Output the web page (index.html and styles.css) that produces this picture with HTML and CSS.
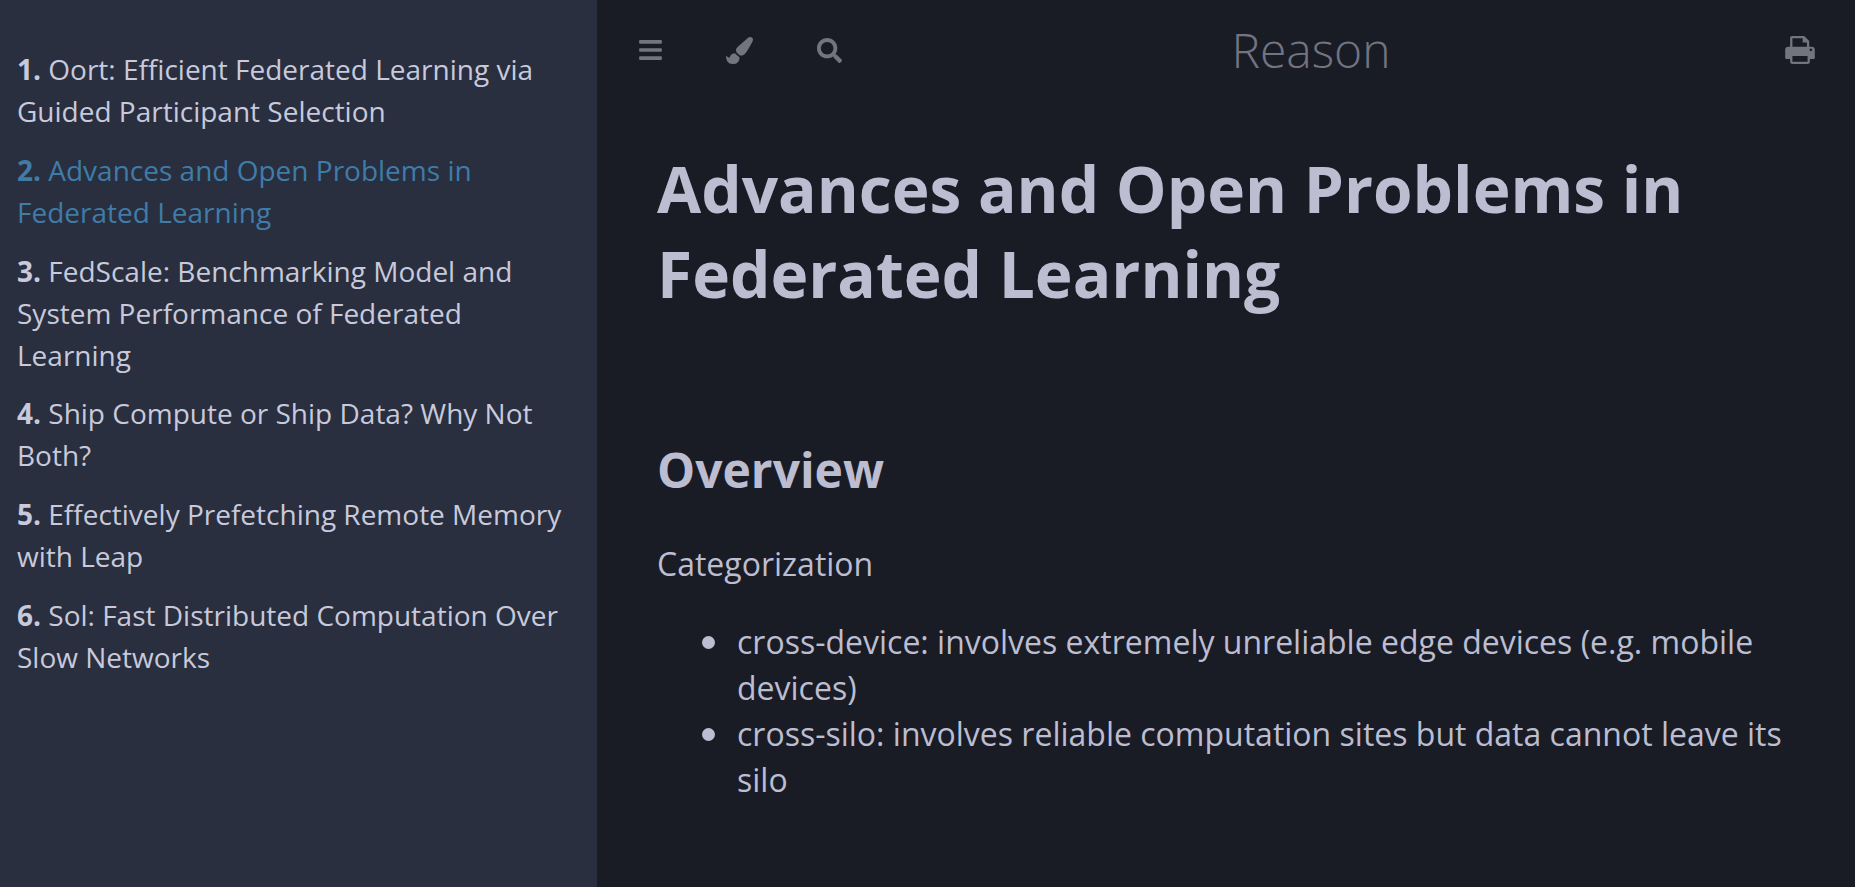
FILE: index.html
```html
<!DOCTYPE html>
<html lang="en">
<head>
  <meta charset="UTF-8">
  <title>Reason</title>
  <link rel="stylesheet" href="styles.css">
</head>
<body>
  <nav class="sidebar">
    <ol class="chapters">
      <li><a href="#"><strong>1.</strong> Oort: Efficient Federated Learning via Guided Participant Selection</a></li>
      <li class="active"><a href="#"><strong>2.</strong> Advances and Open Problems in Federated Learning</a></li>
      <li><a href="#"><strong>3.</strong> FedScale: Benchmarking Model and System Performance of Federated Learning</a></li>
      <li><a href="#"><strong>4.</strong> Ship Compute or Ship Data? Why Not Both?</a></li>
      <li><a href="#"><strong>5.</strong> Effectively Prefetching Remote Memory with Leap</a></li>
      <li><a href="#"><strong>6.</strong> Sol: Fast Distributed Computation Over Slow Networks</a></li>
    </ol>
  </nav>
  <div class="page">
    <header class="menu-bar">
      <div class="menu-left">
        <svg class="icon icon-bars" viewBox="0 0 448 512"><path d="M16 132h416c8.800 0 16-7.200 16-16V76c0-8.800-7.200-16-16-16H16C7.200 60 0 67.200 0 76v40c0 8.800 7.200 16 16 16zm0 160h416c8.800 0 16-7.200 16-16v-40c0-8.800-7.200-16-16-16H16c-8.800 0-16 7.200-16 16v40c0 8.800 7.200 16 16 16zm0 160h416c8.800 0 16-7.200 16-16v-40c0-8.800-7.200-16-16-16H16c-8.800 0-16 7.200-16 16v40c0 8.800 7.200 16 16 16z"/></svg>
        <svg class="icon icon-brush" viewBox="0 0 512 512"><path d="M167.020 309.340c-40.120 2.580-76.530 17.860-97.190 72.300-2.350 6.210-8 9.980-14.590 9.980-11.110 0-45.460-27.670-55.250-34.350C0 439.620 37.930 512 128 512c75.860 0 128-43.770 128-120.190 0-3.110-.65-6.080-.97-9.130l-88.010-73.340zM457.890 0c-15.160 0-29.370 6.710-40.210 16.450C213.270 199.050 192 203.340 192 257.090c0 13.700 3.250 26.760 8.730 38.700l63.820 53.180c7.210 1.800 14.640 3.030 22.390 3.030 62.110 0 98.110-45.470 211.160-256.460 7.380-14.350 13.900-29.850 13.900-45.990C512 20.640 486 0 457.890 0z"/></svg>
        <svg class="icon icon-search" viewBox="0 0 512 512"><path d="M505 442.700L405.300 343c-4.500-4.500-10.600-7-17-7H372c27.600-35.300 44-79.700 44-128C416 93.100 322.900 0 208 0S0 93.100 0 208s93.100 208 208 208c48.300 0 92.700-16.400 128-44v16.300c0 6.400 2.500 12.500 7 17l99.700 99.700c9.400 9.400 24.600 9.400 33.900 0l28.300-28.300c9.400-9.400 9.400-24.600.1-34zM208 336c-70.700 0-128-57.200-128-128 0-70.700 57.200-128 128-128 70.700 0 128 57.200 128 128 0 70.700-57.200 128-128 128z"/></svg>
      </div>
      <h1 class="book-title">Reason</h1>
      <div class="menu-right">
        <svg class="icon icon-print" viewBox="0 0 90 85"><path fill-rule="evenodd" d="M20 0H58L73 15V33H80Q90 33 90 43V66Q90 70 86 70H75V78Q75 85 68 85H22Q15 85 15 78V70H4Q0 70 0 66V43Q0 33 10 33H15V5Q15 0 20 0ZM22 7V33H66V20H53V7ZM22 61V78H68V61ZM78 38a4 4 0 1 0 .01 0Z"/></svg>
      </div>
    </header>
    <main class="content">
      <h1>Advances and Open Problems in Federated Learning</h1>
      <h2>Overview</h2>
      <p>Categorization</p>
      <ul>
        <li>cross-device: involves extremely unreliable edge devices (e.g. mobile devices)</li>
        <li>cross-silo: involves reliable computation sites but data cannot leave its silo</li>
      </ul>
    </main>
  </div>
</body>
</html>
```

FILE: styles.css
```css
html, body {
  margin: 0;
  height: 100%;
  overflow: hidden;
}
body {
  display: flex;
  font-family: "Open Sans", sans-serif;
  background: #191c25;
  color: #bcbdd0;
}
a {
  color: inherit;
  text-decoration: none;
}
.sidebar {
  width: 597px;
  flex: none;
  box-sizing: border-box;
  background: #292f3f;
  color: #c8c9db;
  padding: 48px 17px 0;
  font-size: 28px;
}
.chapters {
  list-style: none;
  margin: 0;
  padding: 0;
}
.chapters li {
  line-height: 42px;
  margin-bottom: 16.800px;
}
.chapters li.active {
  color: #3f7ca8;
}
.page {
  flex: 1;
  min-width: 0;
}
.menu-bar {
  display: flex;
  align-items: center;
  height: 100px;
  padding: 0 40px 0 42px;
  color: #737480;
}
.menu-left {
  display: flex;
  align-items: center;
  gap: 64px;
}
.menu-right {
  display: flex;
}
.icon {
  width: 26px;
  height: 26px;
  fill: #737480;
}
.icon-bars {
  width: 23px;
}
.icon-brush {
  width: 27px;
  height: 27px;
}
.icon-search {
  width: 25px;
  height: 25px;
}
.icon-print {
  width: 30px;
  height: 28px;
}
.book-title {
  flex: 1;
  margin: 0;
  padding-right: 5px;
  text-align: center;
  font-size: 48px;
  font-weight: 300;
  line-height: 56px;
}
.content {
  padding: 46px 60px 0;
  font-size: 32px;
}
.content h1 {
  font-size: 64px;
  line-height: 85px;
  margin: 0 0 122px;
  font-weight: 700;
}
.content h2 {
  font-size: 48px;
  line-height: 64px;
  margin: 0 0 39px;
}
.content p {
  margin: 0 0 32px;
  line-height: 46px;
}
.content ul {
  list-style: none;
  margin: 0;
  padding-left: 80px;
}
.content li {
  position: relative;
  line-height: 46px;
}
.content li::before {
  content: "";
  position: absolute;
  left: -35px;
  top: 17px;
  width: 13px;
  height: 13px;
  border-radius: 50%;
  background: #bcbdd0;
}
```
